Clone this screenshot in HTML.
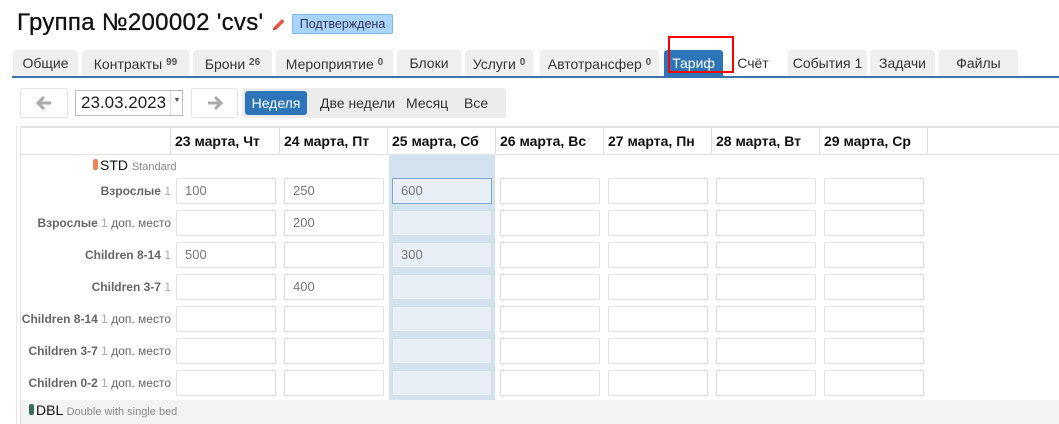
<!DOCTYPE html>
<html><head><meta charset="utf-8"><style>
*{box-sizing:border-box;margin:0;padding:0}
body{width:1059px;height:424px;overflow:hidden;background:#fff;font-family:"Liberation Sans",sans-serif;position:relative;color:#333}
.a{position:absolute}
h1{position:absolute;left:17px;top:9px;font-size:24px;font-weight:normal;color:#111;font-family:"Liberation Sans",sans-serif;letter-spacing:0.3px;-webkit-text-stroke:0.3px #111}
.badge{left:292px;top:14px;width:101px;height:20px;background:#a9d4fb;border:1px solid #7fb8ea;border-radius:2px;font-size:12.5px;color:#335;text-align:center;line-height:18px}
.tab{top:50px;height:26px;background:#efefef;border-radius:3px 3px 0 0;font-size:14px;color:#333;text-align:center;line-height:26px;white-space:nowrap}
.tab sup{font-size:10px;color:#555;vertical-align:4px;font-weight:bold}
.btn{border:1px solid #e4e4e4;border-radius:3px;background:#fff}
.grp{left:242px;top:88px;width:264px;height:30px;background:#ececec;border-radius:3px}
.g{top:91px;height:24px;font-size:14px;line-height:24px;color:#333}
.hd{top:128px;height:26px;font-size:14px;font-weight:bold;color:#111;line-height:27px;padding-left:4px;border-right:1px solid #e0e0e0;white-space:nowrap}
.lb{width:152px;left:19px;text-align:right;font-size:12px;font-weight:bold;color:#666;height:26px;line-height:26px;white-space:nowrap}
.lb span{font-weight:normal;color:#aaa}
.lb i{font-style:normal;font-weight:normal;color:#666}
.in{width:100px;height:26px;border:1px solid #e2e2e2;background:#fff;font-size:13px;color:#777;padding-left:8px;line-height:24px}
.hl{background:#e8eff6;border-color:#d5dde5}
</style></head><body>
<h1>Группа №200002 'cvs'</h1>
<svg class="a" style="left:271px;top:16px" width="16" height="16" viewBox="0 0 16 16"><path d="M3 11 L11 3 L13.5 5.5 L5.5 13.5 L2 14 Z" fill="#e8533d"/><path d="M2 14 L3 11 L5.5 13.5Z" fill="#a33"/></svg>
<div class="a badge">Подтверждена</div>

<div class="a tab" style="left:13px;width:65px">Общие</div>
<div class="a tab" style="left:82px;width:107px">Контракты <sup>99</sup></div>
<div class="a tab" style="left:193px;width:79px">Брони <sup>26</sup></div>
<div class="a tab" style="left:276px;width:117px">Мероприятие <sup>0</sup></div>
<div class="a tab" style="left:397px;width:64px">Блоки</div>
<div class="a tab" style="left:465px;width:68px">Услуги <sup>0</sup></div>
<div class="a tab" style="left:540px;width:119px">Автотрансфер <sup>0</sup></div>
<div class="a tab" style="left:664px;width:59px;background:#2d74b9;color:#fff">Тариф</div>
<div class="a tab" style="left:723px;width:60px;background:#fff">Счёт</div>
<div class="a tab" style="left:788px;width:79px">События 1</div>
<div class="a tab" style="left:870px;width:65px">Задачи</div>
<div class="a tab" style="left:939px;width:79px">Файлы</div>
<div class="a" style="left:12px;top:76px;width:1047px;height:2px;background:#3a72ad"></div>
<div class="a" style="left:668px;top:36px;width:66px;height:37px;border:2px solid #f00"></div>

<div class="a btn" style="left:20px;top:88px;width:48px;height:30px"><svg class="a" style="left:15px;top:7px" width="16" height="14" viewBox="0 0 16 14"><path d="M8 1 L2 7 L8 13 M2 7 H15" stroke="#aaa" stroke-width="3" fill="none"/></svg></div>
<div class="a" style="left:75px;top:90px;width:108px;height:26px;border:1px solid #bbb;font-size:17px;color:#222;line-height:24px;padding-left:5px">23.03.2023<span style="position:absolute;left:94px;top:0;width:13px;height:24px;border-left:1px solid #ddd;font-size:7px;text-align:center;color:#555;line-height:20px">▼</span></div>
<div class="a btn" style="left:191px;top:88px;width:47px;height:30px"><svg class="a" style="left:15px;top:7px" width="16" height="14" viewBox="0 0 16 14"><path d="M8 1 L14 7 L8 13 M14 7 H1" stroke="#aaa" stroke-width="3" fill="none"/></svg></div>
<div class="a grp"></div>
<div class="a g" style="left:245px;width:62px;background:#2d74b9;color:#fff;border-radius:3px;text-align:center">Неделя</div>
<div class="a g" style="left:320px">Две недели</div>
<div class="a g" style="left:406px">Месяц</div>
<div class="a g" style="left:464px">Все</div>

<div class="a" style="left:16px;top:126px;width:1px;height:298px;background:#e6e6e6"></div>
<div class="a" style="left:20px;top:126px;width:1039px;height:2px;background:#e2e2e2"></div>
<div class="a" style="left:20px;top:126px;width:1px;height:298px;background:#e2e2e2"></div>
<div class="a" style="left:20px;top:154px;width:1039px;height:1px;background:#e2e2e2"></div>
<div class="a" style="left:389px;top:155px;width:106px;height:245px;background:#d3e2ef"></div>
<div class="a hd" style="left:21px;width:150px"></div>
<div class="a hd" style="left:171px;width:109px">23 марта, Чт</div>
<div class="a hd" style="left:280px;width:108px">24 марта, Пт</div>
<div class="a hd" style="left:388px;width:108px">25 марта, Сб</div>
<div class="a hd" style="left:496px;width:108px">26 марта, Вс</div>
<div class="a hd" style="left:604px;width:108px">27 марта, Пн</div>
<div class="a hd" style="left:712px;width:108px">28 марта, Вт</div>
<div class="a hd" style="left:820px;width:108px">29 марта, Ср</div>

<div class="a" style="left:93px;top:157px;font-size:14px;color:#111;white-space:nowrap"><span style="display:inline-block;width:5px;height:11px;background:#e8875c;border-radius:2px;margin-right:2px"></span>STD <span style="font-size:11px;color:#888">Standard</span></div>

<div class="a lb" style="top:178px">Взрослые <span>1</span></div>
<div class="a lb" style="top:210px">Взрослые <span>1</span> <i>доп. место</i></div>
<div class="a lb" style="top:242px">Children 8-14 <span>1</span></div>
<div class="a lb" style="top:274px">Children 3-7 <span>1</span></div>
<div class="a lb" style="top:306px;left:15px;width:156px">Children 8-14 <span>1</span> <i>доп. место</i></div>
<div class="a lb" style="top:338px">Children 3-7 <span>1</span> <i>доп. место</i></div>
<div class="a lb" style="top:370px">Children 0-2 <span>1</span> <i>доп. место</i></div>

<div id="grid"></div>
<script>
var cols=[176,284,392,500,608,716,824],rows=[178,210,242,274,306,338,370];
var vals={"0,0":"100","0,1":"250","0,2":"600","1,1":"200","2,0":"500","2,2":"300","3,1":"400"};
var h="";
rows.forEach(function(y,r){cols.forEach(function(x,c){
var v=vals[r+","+c]||"";var cls="a in"+(c==2?" hl":"");
var st="left:"+x+"px;top:"+y+"px;";if(r==0&&c==2)st+="border-color:#7ea6cf;";
h+='<div class="'+cls+'" style="'+st+'">'+v+'</div>';});});
document.getElementById("grid").innerHTML=h;
</script>

<div class="a" style="left:21px;top:400px;width:1038px;height:24px;background:#f3f3f3"></div>
<div class="a" style="left:29px;top:402px;font-size:14px;color:#111;white-space:nowrap"><span style="display:inline-block;width:5px;height:11px;background:#3b6e5a;border-radius:2px;margin-right:2px"></span>DBL <span style="font-size:11px;color:#888">Double with single bed</span></div>
</body></html>
